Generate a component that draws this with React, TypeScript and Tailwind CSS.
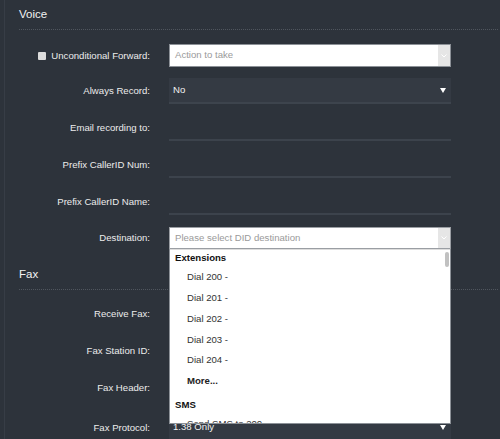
import React from "react";

function Chevron() {
  return (
    <div className="flex h-full w-[12px] items-center justify-center bg-[#e6e6e6]">
      <svg width="6" height="4" viewBox="0 0 6 4">
        <path d="M0.5 0.5 L3 3 L5.5 0.5" fill="none" stroke="#ffffff" strokeWidth="1" />
      </svg>
    </div>
  );
}

function Tri() {
  return (
    <svg width="6" height="5" viewBox="0 0 6 5" className="mr-[5px]">
      <path d="M0 0 H6 L3 5 Z" fill="#ffffff" />
    </svg>
  );
}

function Label({ children }: { children: React.ReactNode }) {
  return (
    <div className="flex w-[145px] shrink-0 items-center justify-end text-[9.6px] leading-[12px] text-[#ececec]">
      {children}
    </div>
  );
}

export default function App() {
  const items = ["Dial 200 -", "Dial 201 -", "Dial 202 -", "Dial 203 -", "Dial 204 -"];
  return (
    <div className="h-[439px] w-[500px] overflow-hidden bg-[#2d333b] font-[family-name:'Liberation_Sans',Arial,sans-serif]">
      <div className="ml-[4px] h-full border-l border-[#373d46]">
        {/* Voice heading */}
        <div className="ml-[14px] mr-[2px] h-[30px] border-b border-dotted border-[#50565e] pt-[7px] text-[11.5px] leading-[14px] text-[#f2f2f2]">
          Voice
        </div>

        {/* Unconditional Forward */}
        <div className="mt-[14px] flex h-[23px] items-center">
          <Label>
            <span className="mr-[5px] inline-block h-[8px] w-[8px] rounded-[1px] bg-[#dcdcdc]" />
            Unconditional Forward:
          </Label>
          <div className="ml-[19px] flex h-[23px] w-[282px] items-center border border-[#8c9197] bg-white">
            <span className="flex-1 pl-[5px] text-[9.6px] text-[#9a9a9a]">Action to take</span>
            <Chevron />
          </div>
        </div>

        {/* Always Record */}
        <div className="mt-[11px] flex h-[26px] items-center">
          <Label>Always Record:</Label>
          <div className="ml-[19px] flex h-[26px] w-[282px] items-center border-b-2 border-[#3d444d] bg-[#343a43]">
            <span className="flex-1 pl-[4px] text-[9.6px] text-[#f2f2f2]">No</span>
            <Tri />
          </div>
        </div>

        {["Email recording to:", "Prefix CallerID Num:", "Prefix CallerID Name:"].map((l) => (
          <div key={l} className="mt-[11px] flex h-[26px] items-center">
            <Label>{l}</Label>
            <div className="ml-[19px] h-[26px] w-[282px] border-b-2 border-[#3c434c]" />
          </div>
        ))}

        {/* Destination */}
        <div className="mt-[12px] flex h-[22px] items-center">
          <Label>Destination:</Label>
          <div className="relative ml-[19px] h-[22px] w-[282px]">
            <div className="flex h-[22px] w-full items-center border border-[#9a9ea3] bg-white">
              <span className="flex-1 pl-[5px] text-[9.6px] text-[#9a9a9a]">Please select DID destination</span>
              <Chevron />
            </div>
            <div className="absolute left-0 top-[22px] z-10 h-[175px] w-[282px] overflow-hidden border border-t-0 border-[#8c9197] bg-white">
              <div className="h-px w-full bg-[#dddddd]" />
              <div className="flex h-[17px] items-center pl-[5px] text-[9.6px] font-bold text-[#111]">Extensions</div>
              {items.map((i) => (
                <div key={i} className="flex h-[20.8px] items-center pl-[17px] text-[9.6px] text-[#333]">
                  {i}
                </div>
              ))}
              <div className="flex h-[20.8px] items-center pl-[17px] text-[9.6px] font-bold text-[#222]">More...</div>
              <div className="mt-[5px] flex h-[17px] items-center pl-[5px] text-[9.6px] font-bold text-[#111]">SMS</div>
              <div className="flex h-[20.8px] items-center pl-[17px] text-[9.6px] text-[#333]">Send SMS to 200 -</div>
              <div className="absolute right-[1px] top-[3px] h-[15px] w-[4px] rounded-[2px] bg-[#c1c1c1]" />
            </div>
          </div>
        </div>

        {/* Fax heading */}
        <div className="ml-[14px] mr-[2px] h-[41px] border-b border-dotted border-[#50565e] pt-[18px] text-[11.5px] leading-[14px] text-[#f2f2f2]">
          Fax
        </div>

        <div className="mt-[11px] flex h-[26px] items-center">
          <Label>Receive Fax:</Label>
          <div className="ml-[19px] h-[26px] w-[282px] border-b-2 border-[#3d444d] bg-[#343a43]" />
        </div>
        {["Fax Station ID:", "Fax Header:"].map((l) => (
          <div key={l} className="mt-[11px] flex h-[26px] items-center">
            <Label>{l}</Label>
            <div className="ml-[19px] h-[26px] w-[282px] border-b-2 border-[#3c434c]" />
          </div>
        ))}
        <div className="mt-[14px] flex h-[26px] items-center">
          <Label>Fax Protocol:</Label>
          <div className="ml-[19px] flex h-[26px] w-[282px] items-center border-b-2 border-[#3d444d] bg-[#343a43]">
            <span className="flex-1 pl-[4px] text-[9.6px] text-[#f2f2f2]">1.38 Only</span>
            <Tri />
          </div>
        </div>
      </div>
    </div>
  );
}
